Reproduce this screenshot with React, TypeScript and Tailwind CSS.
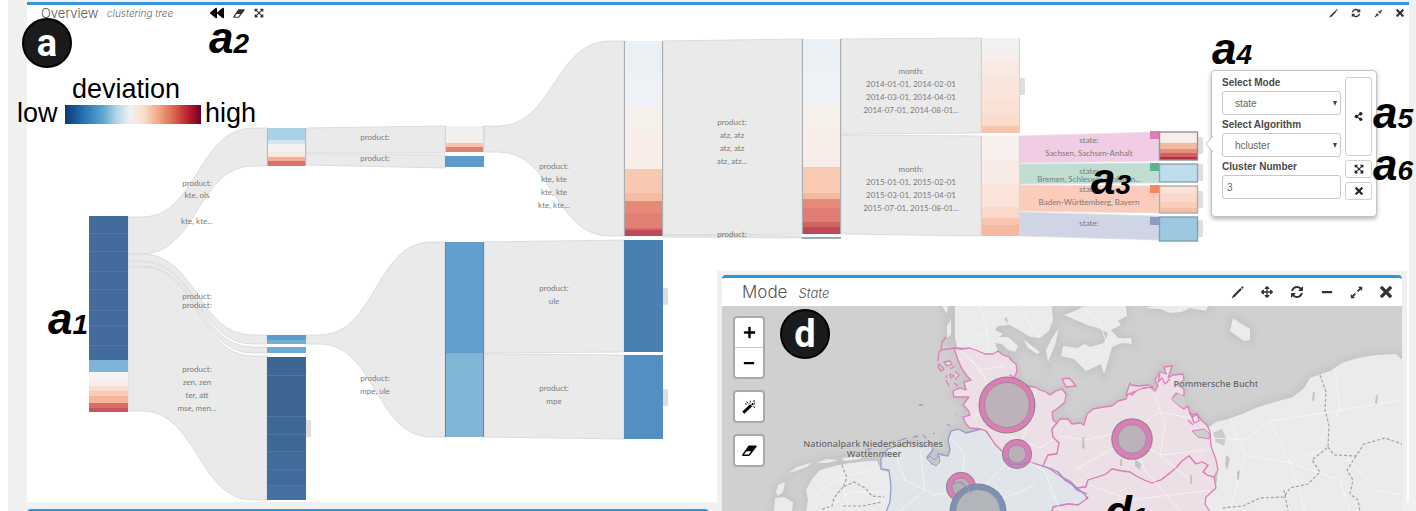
import React from "react";
import {
  FaArrowsAlt,
  FaBackward,
  FaExpandArrowsAlt,
  FaMinus,
  FaPlus,
  FaShareAlt,
} from "react-icons/fa";

type Band = [from: number, to: number, color: string];

interface Bar {
  x: number;
  bands: Band[];
  lines?: number[];
  edge?: string;
}

const BAR_WIDTH = 39;

const bars: Bar[] = [
  {
    x: 89,
    bands: [
      [216, 360, "#436c9c"],
      [360, 372, "#7db3d6"],
      [372, 381, "#f5f3f3"],
      [381, 386, "#f8eee9"],
      [386, 391, "#f9ddcf"],
      [391, 396, "#f8ccb7"],
      [396, 403, "#f4b59b"],
      [403, 408, "#d76d6c"],
      [408, 412, "#c9535c"],
    ],
    lines: [233, 251, 271, 289, 310, 325, 345],
  },
  {
    x: 267,
    bands: [
      [128, 140, "#abd1e5"],
      [140, 144, "#d3e5ef"],
      [144, 152, "#f3f1f1"],
      [152, 157, "#f8e9e1"],
      [157, 161, "#f3b096"],
      [161, 166, "#d9706e"],
    ],
    edge: "#b9bcbf",
  },
  { x: 267, bands: [[335, 340, "#5d9bcb"], [340, 344, "#74b1d6"]] },
  { x: 267, bands: [[347, 353, "#6fabd3"]] },
  {
    x: 267,
    bands: [
      [357, 416, "#3d6692"],
      [416, 451, "#3e6997"],
      [451, 485, "#406c9c"],
      [485, 500, "#4470a3"],
    ],
    lines: [375, 416, 434, 451, 469, 485],
  },
  {
    x: 445,
    bands: [
      [126, 134, "#edf1f5"],
      [134, 143, "#f7eeea"],
      [143, 147, "#f7c5af"],
      [147, 152, "#e08072"],
    ],
    edge: "#d4d6d8",
  },
  { x: 445, bands: [[156, 167, "#5d99ca"]] },
  { x: 445, bands: [[242, 353, "#639fce"], [353, 437, "#80b5d6"]], edge: "#5d87ac" },
  {
    x: 624,
    bands: [
      [41, 74, "#ebf0f5"],
      [74, 108, "#eef1f6"],
      [108, 134, "#f6f0eb"],
      [134, 169, "#f8ede8"],
      [169, 193, "#f9c8b2"],
      [193, 201, "#f6bda4"],
      [201, 213, "#e58a79"],
      [213, 228, "#e07f73"],
      [228, 230, "#d4686a"],
      [230, 236, "#be4858"],
    ],
    edge: "#a9adb1",
  },
  { x: 624, bands: [[240, 352, "#4a7fb2"]] },
  { x: 624, bands: [[355, 439, "#548ec2"]] },
  {
    x: 802,
    bands: [
      [39, 72, "#ebf0f5"],
      [72, 105, "#eef1f6"],
      [105, 131, "#f6f0eb"],
      [131, 167, "#f8ede8"],
      [167, 193, "#f8c9b3"],
      [193, 199, "#f4b9a0"],
      [199, 208, "#e58a79"],
      [208, 222, "#df7d72"],
      [222, 227, "#cf6463"],
      [227, 234, "#be4858"],
    ],
    edge: "#a9adb1",
  },
  { x: 802, bands: [[237, 239, "#a0a8ae"]] },
  {
    x: 981,
    bands: [
      [38, 51, "#f2f1f1"],
      [51, 62, "#f5eeeb"],
      [62, 78, "#f8eae3"],
      [78, 98, "#f9e5dc"],
      [98, 115, "#fae1d5"],
      [115, 126, "#fadbcc"],
      [126, 133, "#f8c6af"],
    ],
    edge: "#d8d2d0",
  },
  {
    x: 981,
    bands: [
      [136, 160, "#f7f0ec"],
      [160, 184, "#f8ebe5"],
      [184, 207, "#fae4da"],
      [207, 218, "#fad9ca"],
      [218, 225, "#f7c5af"],
      [225, 236, "#f4b9a2"],
    ],
    edge: "#d8d2d0",
  },
];

const leafBars: { y: number; height: number; bands: Band[]; edge: string }[] = [
  {
    y: 132,
    height: 28,
    edge: "#9b8f93",
    bands: [
      [132, 143, "#f8ede8"],
      [143, 149, "#f3b9a1"],
      [149, 153, "#e58f7c"],
      [153, 157, "#d0605f"],
      [157, 160, "#b32d45"],
    ],
  },
  { y: 164, height: 18, edge: "#86a7b9", bands: [[164, 182, "#bfdcea"]] },
  {
    y: 186,
    height: 27,
    edge: "#b8a9a4",
    bands: [
      [186, 193, "#fae3d8"],
      [193, 202, "#f9d9cb"],
      [202, 208, "#f8ceba"],
      [208, 213, "#f5bda6"],
    ],
  },
  { y: 217, height: 24, edge: "#7ba0b8", bands: [[217, 241, "#9dc8e0"]] },
];

/** Ribbon between two columns: [x0, top0, bottom0, x1, top1, bottom1]. */
type Ribbon = [number, number, number, number, number, number];

const curvedRibbons: Ribbon[] = [
  [128, 217, 254, 267, 128, 166],
  [128, 254, 261, 267, 335, 344],
  [128, 262, 266, 267, 347, 353],
  [128, 267, 411, 267, 356, 500],
  [484, 126, 152, 624, 41, 236],
  [306, 335, 344, 445, 242, 437],
];

const straightRibbons: Ribbon[] = [
  [306, 128, 153, 445, 126, 153],
  [306, 154, 165, 445, 155, 168],
  [484, 242, 353, 624, 240, 352],
  [484, 354, 437, 624, 355, 439],
  [663, 41, 235, 802, 39, 234],
  [663, 235, 237, 802, 236, 238],
  [841, 39, 134, 981, 38, 133],
  [841, 135, 234, 981, 136, 236],
];

const stateRibbons: { shape: Ribbon; fill: string; tag: string; tagY: number }[] = [
  { shape: [1020, 136, 163, 1159, 132, 161], fill: "#f0cde4", tag: "#da7dbb", tagY: 131 },
  { shape: [1020, 164, 184, 1159, 163, 183], fill: "#c0ddd2", tag: "#60b096", tagY: 163 },
  { shape: [1020, 185, 211, 1159, 186, 213], fill: "#fbccbb", tag: "#f48660", tagY: 185 },
  { shape: [1020, 212, 236, 1159, 216, 240], fill: "#d0d5e5", tag: "#8d9bc5", tagY: 217 },
];

const handles: [number, number][] = [
  [306, 420],
  [663, 288],
  [663, 389],
  [1020, 78],
  [1198, 137],
  [1198, 164],
  [1198, 191],
  [1198, 220],
];

const chartTexts: [number, number, string][] = [
  [197, 186, "product:"],
  [197, 198, "kte, ols"],
  [197, 224, "kte, kte..."],
  [197, 299, "product:"],
  [197, 308, "product:"],
  [197, 372, "product:"],
  [197, 385, "zen, zen"],
  [197, 398, "ter, att"],
  [197, 411, "mse, men..."],
  [375, 140, "product:"],
  [375, 161, "product:"],
  [375, 381, "product:"],
  [375, 394, "mpe, ule"],
  [554, 169, "product:"],
  [554, 182, "kte, kte"],
  [554, 195, "kte, kte"],
  [554, 208, "kte, kte..."],
  [554, 291, "product:"],
  [554, 304, "ule"],
  [554, 391, "product:"],
  [554, 404, "mpe"],
  [732, 125, "product:"],
  [732, 138, "atz, atz"],
  [732, 151, "atz, atz"],
  [732, 164, "atz, atz..."],
  [732, 237, "product:"],
  [911, 74, "month:"],
  [911, 87, "2014-01-01, 2014-02-01"],
  [911, 100, "2014-03-01, 2014-04-01"],
  [911, 113, "2014-07-01, 2014-08-01..."],
  [911, 172, "month:"],
  [911, 185, "2015-01-01, 2015-02-01"],
  [911, 198, "2015-03-01, 2015-04-01"],
  [911, 211, "2015-07-01, 2015-08-01..."],
  [1089, 143, "state:"],
  [1089, 156, "Sachsen, Sachsen-Anhalt"],
  [1089, 174, "state:"],
  [1089, 182, "Bremen, Schleswig-Holstein..."],
  [1089, 192, "state:"],
  [1089, 205, "Baden-Württemberg, Bayern"],
  [1089, 226, "state:"],
];

interface IconProps {
  size: number;
}

function PencilIcon({ size }: IconProps) {
  return (
    <svg width={size} height={size} viewBox="0 0 16 16" fill="currentColor" aria-hidden="true">
      <path d="M12.2,1.8L13.6,0.6Q14.3,0 15,0.8Q15.8,1.6 15.2,2.3L14.1,3.7ZM11.5,2.5L13.4,4.4L4.4,13.6L0.8,15.3L2.4,11.6Z" />
    </svg>
  );
}

function RefreshIcon({ size }: IconProps) {
  return (
    <svg width={size} height={size} viewBox="0 0 1792 1792" fill="currentColor" aria-hidden="true">
      <path d="M1639 1056q0 5-1 7-64 268-268 434.500t-478 166.500q-146 0-282.500-55t-243.500-157l-129 129q-19 19-45 19t-45-19-19-45v-448q0-26 19-45t45-19h448q26 0 45 19t19 45-19 45l-137 137q71 66 161 102t187 36q134 0 250-65t186-179q11-17 53-117 8-23 30-23h192q13 0 22.500 9.500t9.500 22.500zm25-800v448q0 26-19 45t-45 19h-448q-26 0-45-19t-19-45 19-45l138-138q-148-137-349-137-134 0-250 65t-186 179q-11 17-53 117-8 23-30 23h-199q-13 0-22.500-9.500t-9.500-22.500v-7q65-268 270-434.500t480-166.500q146 0 284 55.500t245 156.500l130-129q19-19 45-19t45 19 19 45z" />
    </svg>
  );
}

function EraserIcon({ size }: IconProps) {
  return (
    <svg width={size} height={(size * 3) / 4} viewBox="0 0 16 12" fill="currentColor" aria-hidden="true">
      <path
        fillRule="evenodd"
        d="M6.8,0.8Q7.2,0.4 7.8,0.4H14.8Q16.2,0.6 15.4,2L8.3,11.1Q7.9,11.6 7.2,11.6H0.9Q-0.3,11.3 0.5,9.9ZM2.1,10.2H7L9.8,6.7H4.9Z"
      />
    </svg>
  );
}

function WandIcon({ size }: IconProps) {
  return (
    <svg width={size} height={size} viewBox="0 0 16 16" fill="none" stroke="currentColor" aria-hidden="true">
      <path d="M1.5,14.5L10.5,6" strokeWidth="3.4" />
      <path d="M11,5.6L13,3.8" strokeWidth="2" />
      <path d="M5,2L7,3.6M9.5,0.8V3M12.5,1.2H15M14.5,3V5M12.8,7L15,9M3.6,4.6H5.6M7.5,4.8L8.5,4" strokeWidth="1" />
    </svg>
  );
}

function CloseIcon({ size }: IconProps) {
  return (
    <svg width={size} height={size} viewBox="0 0 12 12" aria-hidden="true">
      <path d="M2,2L10,10M10,2L2,10" stroke="currentColor" strokeWidth="3.2" strokeLinecap="square" />
    </svg>
  );
}

function DiagonalIcon({ size, inward }: IconProps & { inward?: boolean }) {
  return (
    <svg width={size} height={size} viewBox="0 0 16 16" aria-hidden="true">
      <g stroke="currentColor" strokeWidth="2.2" fill="none">
        <path d="M2,14L6.6,9.400M9.400,6.600L14,2" />
      </g>
      {inward ? (
        <path d="M2.8,8.300H7.700V13.200ZM8.300,2.800V7.700H13.200Z" fill="currentColor" />
      ) : (
        <path d="M9.800,1H15V6.200ZM1,9.800V15H6.200Z" fill="currentColor" />
      )}
    </svg>
  );
}

function curvedPath([x0, t0, b0, x1, t1, b1]: Ribbon) {
  const s = x0 + 14;
  const e = x1 - 14;
  const m = (s + e) / 2;
  return `M${x0},${t0}H${s}C${m},${t0} ${m},${t1} ${e},${t1}H${x1}V${b1}H${e}C${m},${b1} ${m},${b0} ${s},${b0}H${x0}Z`;
}

function straightPath([x0, t0, b0, x1, t1, b1]: Ribbon) {
  return `M${x0},${t0}L${x1},${t1}V${b1}L${x0},${b0}Z`;
}

function ClusterTree() {
  return (
    <svg
      className="block h-[478px] w-[1382px] shrink-0"
      viewBox="27 24 1382 478"
      role="img"
      aria-label="Clustering tree"
    >
      <path d="M860,23.500H1072" stroke="#ececec" />
      <g fill="#eaeaea" stroke="#d6d6d6" strokeWidth="0.8">
        {curvedRibbons.map((r, i) => (
          <path key={i} d={curvedPath(r)} />
        ))}
        {straightRibbons.map((r, i) => (
          <path key={i} d={straightPath(r)} />
        ))}
      </g>
      {stateRibbons.map(({ shape, fill }, i) => (
        <path key={i} d={straightPath(shape)} fill={fill} stroke="#dfdfe3" strokeWidth="0.8" />
      ))}
      {handles.map(([x, y], i) => (
        <rect key={i} x={x - 3} y={y} width="8" height="17" rx="1.5" fill="#dedede" />
      ))}
      {bars.map((bar, i) => {
        const top = bar.bands[0][0];
        const bottom = bar.bands[bar.bands.length - 1][1];
        return (
          <g key={i}>
            {bar.bands.map(([from, to, color]) => (
              <rect key={from} x={bar.x} y={from} width={BAR_WIDTH} height={to - from} fill={color} />
            ))}
            {bar.lines?.map((y) => (
              <rect key={y} x={bar.x} y={y} width={BAR_WIDTH} height="1" fill="#4f77a6" />
            ))}
            {bar.edge && (
              <path
                d={`M${bar.x + 0.5},${top}V${bottom}M${bar.x + BAR_WIDTH - 0.5},${top}V${bottom}`}
                stroke={bar.edge}
                strokeWidth="1"
              />
            )}
          </g>
        );
      })}
      {leafBars.map((leaf) => (
        <g key={leaf.y}>
          {leaf.bands.map(([from, to, color]) => (
            <rect key={from} x="1159" y={from} width="39" height={to - from} fill={color} />
          ))}
          <rect
            x="1159.5"
            y={leaf.y}
            width="38"
            height={leaf.height}
            fill="none"
            stroke={leaf.edge}
            strokeWidth="1.4"
          />
        </g>
      ))}
      {stateRibbons.map(({ tag, tagY }) => (
        <rect key={tagY} x="1150" y={tagY} width="9" height="8" fill={tag} />
      ))}
      <g className="font-['Lato',sans-serif] text-[8px]" fill="#7a7a7a" textAnchor="middle">
        {chartTexts.map(([x, y, text], i) => (
          <text key={i} x={x} y={y}>
            {text}
          </text>
        ))}
      </g>
    </svg>
  );
}

function IconButton({ label, children }: { label: string; children: React.ReactNode }) {
  return (
    <button type="button" aria-label={label} className="flex items-center justify-center text-[#333]">
      {children}
    </button>
  );
}

function PickList({ id, label, value }: { id: string; label: string; value: string }) {
  return (
    <div>
      <label htmlFor={id} className="block h-4 text-[10px] leading-4 font-bold text-[#4a4a4a]">
        {label}
      </label>
      <div className="relative">
        <select
          id={id}
          defaultValue={value}
          className="block h-6 w-full appearance-none rounded-[3px] border border-[#c8c8c8] bg-white pl-3 text-[10px] text-[#666]"
        >
          <option>{value}</option>
        </select>
        <span className="pointer-events-none absolute top-[10px] right-1 border-x-[2px] border-t-[5px] border-x-transparent border-t-[#444]" />
      </div>
    </div>
  );
}

function ClusterPopover() {
  const action =
    "flex items-center justify-center rounded-[3px] border border-[#d0d0d0] bg-white text-[#222]";
  return (
    <form className="absolute top-[65px] left-[1184px] flex h-[147px] w-[166px] gap-1 rounded-[4px] border border-[#c4c4c4] bg-white pt-1 pr-1 pl-[10px] font-['Liberation_Sans',sans-serif] shadow-[0_2px_4px_rgba(0,0,0,0.3)]">
      <svg className="absolute top-[65px] -left-[7px] h-4 w-2" viewBox="0 0 8 16">
        <path d="M8,0L1,8L8,16" fill="#fff" stroke="#c4c4c4" />
      </svg>
      <div className="flex flex-1 flex-col gap-[2px]">
        <PickList id="mode" label="Select Mode" value="state" />
        <PickList id="algorithm" label="Select Algorithm" value="hcluster" />
        <div>
          <label htmlFor="count" className="block h-4 text-[10px] leading-4 font-bold text-[#4a4a4a]">
            Cluster Number
          </label>
          <input
            id="count"
            defaultValue="3"
            className="block h-6 w-full rounded-[3px] border border-[#c8c8c8] bg-white px-1 text-[10px] text-[#666]"
          />
        </div>
      </div>
      <div className="flex w-[27px] flex-col gap-1 pt-[2px]">
        <button type="button" aria-label="Split cluster" className={`${action} h-[79px]`}>
          <FaShareAlt size={9} />
        </button>
        <button type="button" aria-label="Expand cluster" className={`${action} h-[18px]`}>
          <FaExpandArrowsAlt size={10} />
        </button>
        <button type="button" aria-label="Remove cluster" className={`${action} h-[18px]`}>
          <CloseIcon size={8} />
        </button>
      </div>
    </form>
  );
}

function Legend() {
  return (
    <div className="absolute top-[77px] -left-[10px] flex flex-col font-['Liberation_Sans',sans-serif] text-[27px] leading-6 text-black">
      <span className="pl-[55px]">deviation</span>
      <div className="flex items-center gap-1">
        <span className="w-11">low</span>
        <span className="mt-[2px] h-[19px] w-[136px] bg-[linear-gradient(90deg,#0a3a76,#2a76b6_15%,#5ea6cf_28%,#b3d7e8_38%,#f1f1f1_48%,#fbdcc9_58%,#f2a583_69%,#d75f4c_81%,#b3172d_92%,#6b0220)]" />
        <span>high</span>
      </div>
    </div>
  );
}

function OverviewPanel() {
  return (
    <section className="relative col-span-full row-span-2 row-start-1 overflow-hidden border-t-[3px] border-[#3a95d8] bg-white">
      <header className="mb-[3px] flex h-4 items-center justify-between pr-[5px] pl-[14px]">
        <div className="flex items-center">
          <h1 className="w-[66px] font-['Inter',sans-serif] text-[13px] leading-4 font-light text-[#555]">
            Overview
          </h1>
          <em className="w-[103px] font-['Inter',sans-serif] text-[10px] leading-4 font-light text-[#666]">
            clustering tree
          </em>
          <div className="flex items-center gap-[9px]">
            <IconButton label="Back">
              <FaBackward size={14} color="#000" />
            </IconButton>
            <IconButton label="Erase">
              <EraserIcon size={12} />
            </IconButton>
            <IconButton label="Expand all">
              <FaExpandArrowsAlt size={10} />
            </IconButton>
          </div>
        </div>
        <div className="flex items-center gap-[13px]">
          <IconButton label="Edit">
            <PencilIcon size={9} />
          </IconButton>
          <IconButton label="Refresh">
            <RefreshIcon size={10} />
          </IconButton>
          <IconButton label="Compress">
            <DiagonalIcon size={9} inward />
          </IconButton>
          <IconButton label="Close">
            <CloseIcon size={8} />
          </IconButton>
        </div>
      </header>
      <ClusterTree />
      <ClusterPopover />
    </section>
  );
}

const SCHLESWIG =
  "M954,348L962,349L970,348L978,351L985,354L993,354L998,351L1003,355L1009,357L1012,361L1016,364L1017,371L1014,378L1010,375L1018,380L1027,386L1035,387L1040,390L1046,392L1050,395L1056,391L1062,389L1066,394L1065,402L1058,408L1052,412L1053,420L1057,423L1052,429L1053,437L1059,443L1057,454L1048,455L1043,466L1030,462L1012,458L1002,451L995,444L991,438L986,431L981,429L970,428L966,424L963,417L970,415L968,410L963,405L966,401L969,397L960,397L954,397L953,391L960,388L966,390L964,382L971,380L967,376L962,369L958,360Z";
const MECKLENBURG =
  "M1057,423L1060,419L1068,419L1072,424L1080,423L1084,425L1087,414L1093,409L1103,407L1112,406L1118,401L1126,399L1128,393L1132,395L1138,389L1150,387L1155,391L1158,386L1155,380L1160,372L1166,374L1164,367L1172,366L1170,372L1168,378L1173,375L1183,374L1184,380L1177,385L1184,389L1184,396L1176,393L1172,399L1178,405L1184,409L1188,406L1190,414L1198,415L1201,420L1207,425L1210,432L1211,446L1216,460L1218,470L1214,477L1207,475L1203,472L1208,465L1202,462L1196,464L1189,456L1182,461L1176,468L1170,473L1161,480L1152,483L1144,480L1136,476L1130,472L1122,471L1112,469L1106,474L1098,477L1088,480L1086,487L1077,488L1070,481L1060,476L1050,469L1043,466L1048,455L1057,454L1059,443L1053,437L1052,429Z";
const BRANDENBURG =
  "M1077,488L1086,487L1088,480L1098,477L1106,474L1112,469L1122,471L1130,472L1136,476L1144,480L1152,483L1161,480L1170,473L1176,468L1182,461L1189,456L1196,464L1202,462L1208,465L1203,472L1207,475L1214,477L1216,488L1206,497L1205,504L1210,512H1052L1053,507L1068,504L1078,505L1088,498L1082,492Z";
const LOWER_SAXONY =
  "M951,431L958,429L966,433L981,429L986,431L991,438L995,444L1002,451L1012,458L1030,462L1043,466L1052,469L1058,472L1065,480L1073,485L1077,490L1087,494L1086,500L1078,505L1068,504L1053,507L1052,512H886L890,502L891,486L889,470L881,469L881,458L888,449L897,446L912,442L922,447L930,444L933,450L927,457L932,464L938,461L938,454L948,456L950,450L948,440Z";
const NETHERLANDS =
  "M806,512L808,500L806,490L812,479L820,470L834,466L850,463L868,461L877,461L881,470L889,472L891,486L890,502L886,512Z";
const POLAND =
  "M1209,427L1216,422L1228,419L1242,414L1258,407L1275,402L1293,397L1304,388L1310,378L1318,375L1330,371L1342,363L1358,358L1376,355L1396,354L1402,360V512H1205L1206,497L1216,488L1218,470L1211,446Z";

const DENMARK = [
  "M955,306H1009L1011,314L1004,319L1009,325L998,326L995,330L1003,334L999,337L1008,337L1018,346L1015,352L1007,349L1002,344L995,343L998,351L993,354L985,354L978,351L970,348L957,347L955,337Z",
  "M1002,306H1052L1053,320L1049,331L1040,338L1030,337L1019,330L1008,324L1006,312Z",
  "M947,326L951,320L951,334L947,338Z",
  "M942,306L948,306L947,314Z",
  "M1023,339L1040,352L1037,354L1028,348Z",
  "M1059,328L1055,345L1048,362L1046,350L1051,340Z",
  "M1064,315L1075,311L1085,306H1126L1127,316L1118,321L1121,325L1111,330L1118,338L1131,338L1132,344L1122,343L1112,347L1107,365L1104,374L1101,364L1086,371L1074,359L1061,356L1063,346L1077,348L1085,344L1090,347L1104,343L1108,333L1098,328L1090,326L1078,321Z",
  "M1145,308L1152,306H1208L1206,311L1190,308L1182,312L1170,313L1160,309Z",
  "M1230,331L1233,318L1240,323L1250,329L1250,340L1244,341Z",
];

const FRISIAN_ISLANDS = [
  "M774,512L775,498L784,497L793,502L792,512Z",
  "M776,492L778,485L785,482L783,492L778,496Z",
  "M788,473L797,467L813,462L807,467L796,471Z",
  "M817,463L826,459L838,460L828,463Z",
  "M842,458L862,456L860,459L844,461Z",
];

const ROADS = [
  "M980,306L986,325L989,353M1020,306L1030,325L1040,338M990,330L970,340M1080,306L1100,322L1107,345",
  "M970,358L985,378L990,400L1008,436L1040,448L1052,440M960,350L980,370L1005,366M990,400L975,418M1035,392L1030,420L1017,454L1008,470M1017,454L990,480L960,511M1017,454L1045,472L1060,511",
  "M895,452L905,480L935,495L965,489L1000,500L1035,485M900,511L925,490L920,450M950,436L965,455L961,487",
  "M1060,436L1085,440L1132,430L1160,412L1200,420M1075,470L1110,450L1132,439L1160,455L1205,450M1132,439L1145,470L1180,511M1090,485L1130,500L1210,490M1155,395L1165,425L1160,455L1190,480",
  "M1215,438L1245,440L1270,421L1310,415L1402,400M1230,420L1245,455L1230,511M1245,455L1290,463L1330,447M1270,421L1290,463L1305,511M1335,370L1340,410L1320,440M1345,455L1375,490L1402,495M1290,463L1340,480L1350,511",
  "M815,495L840,478L870,470M825,511L850,492L885,492M840,478L850,511",
];

const BORDERS = [
  "M1320,375L1326,392L1325,410L1329,425L1328,447L1312,460L1320,472L1308,484L1290,488L1284,497L1260,498L1243,506L1222,508",
  "M1328,447L1334,455L1356,456L1364,444L1385,438L1402,444M1356,456L1347,470L1353,480L1350,494L1358,500L1360,511M1284,490L1288,511",
  "M842,465L847,478L843,487L854,482L865,488L872,496L884,497M843,487L834,498L832,506L820,510M843,506L862,506L882,502",
];

const rings = [
  { cx: 1007, cy: 405, r: 25.5, w: 6, color: "#dd7db8", fill: "#bdb2b9" },
  { cx: 1017, cy: 454, r: 12, w: 6, color: "#dd7db8", fill: "#bbb0b8" },
  { cx: 961, cy: 487, r: 12, w: 6, color: "#dd7db8", fill: "#b4b1b8" },
  { cx: 978, cy: 512, r: 25.5, w: 6, color: "#7c90bb", fill: "#b2b5ba" },
  { cx: 1132, cy: 439, r: 17.5, w: 6.5, color: "#dd7db8", fill: "#bdb2b9" },
];

function StateMap() {
  return (
    <svg
      className="block h-full min-h-[205px] w-full"
      viewBox="722 306 680 205"
      preserveAspectRatio="xMidYMin slice"
      role="img"
      aria-label="Map of states"
    >
      <defs>
        <filter id="shore" x="-5%" y="-5%" width="110%" height="110%">
          <feGaussianBlur stdDeviation="3" />
        </filter>
      </defs>
      <rect x="722" y="306" width="680" height="300" fill="#d0d0d0" />
      <g fill="#c2c2c2" stroke="#c2c2c2" strokeWidth="7" opacity="0.8" filter="url(#shore)">
        {[...DENMARK, ...FRISIAN_ISLANDS, SCHLESWIG, MECKLENBURG, POLAND, LOWER_SAXONY, NETHERLANDS].map((d) => (
          <path key={d} d={d} />
        ))}
      </g>
      <g fill="#ebebeb">
        {[...DENMARK, ...FRISIAN_ISLANDS, NETHERLANDS, POLAND].map((d) => (
          <path key={d} d={d} />
        ))}
      </g>
      <g strokeWidth="1.3" strokeLinejoin="round">
        <path d={LOWER_SAXONY} fill="#e1e4e8" stroke="#93a0c8" />
        <path d={SCHLESWIG} fill="#ecdfe6" stroke="#dd7fb9" />
        <path d={MECKLENBURG} fill="#ecdfe6" stroke="#dd7fb9" />
        <path d={BRANDENBURG} fill="#ecdfe6" stroke="#dd7fb9" />
        <path d="M1043,466L1052,469L1058,472L1065,480L1073,485L1077,490L1087,494" fill="none" stroke="#9391c2" />
      </g>
      <g fill="#cfcfcf" stroke="#dd7fb9">
        <path d="M1192,431L1204,429L1210,434L1209,439L1198,437Z" />
        <path d="M1172,399L1180,394L1186,398L1184,408L1178,405Z" stroke="none" />
      </g>
      <path d="M1213,433L1222,429L1226,438L1224,446L1216,442Z" fill="#cbcbcb" />
      <g fill="none" stroke="#f8f8f8" strokeWidth="1" opacity="0.75">
        {ROADS.map((d) => (
          <path key={d} d={d} />
        ))}
      </g>
      <g fill="none" stroke="#a2a2a2" strokeWidth="1.2" strokeDasharray="3 2">
        {BORDERS.map((d) => (
          <path key={d} d={d} />
        ))}
      </g>
      <g fill="#c4c4c4">
        <path d="M1082,438L1084,437L1085,448L1082,449ZM1135,459L1141,464L1140,470L1135,466ZM1120,460L1122,458L1122,466L1120,466ZM1226,455L1230,458L1227,470L1225,464ZM1237,472L1240,470L1239,480L1237,479ZM1190,476L1192,474L1192,484L1190,483ZM1376,396L1378,394L1377,404L1375,403ZM1313,392L1315,392L1314,402L1312,400Z" />
      </g>
      <g fill="#e9dde4" stroke="#dd7fb9" strokeWidth="1.3" strokeLinejoin="round">
        <path
          d="M946,337L942,342L941,350L939,352L938,361M941,350L948,349L954,348L962,349M939,364L944,369L941,371L938,367Z"
          fill="none"
        />
        <path d="M944,362L950,361L952,364L947,366ZM950,374L954,376L951,378ZM946,380L949,386M955,371L959,375L957,378M950,369L955,366M947,375L946,378M954,383L958,386M955,378L957,380M919,405L923,405M956,414L957,415" />
        <path d="M1062,379L1069,378L1072,381L1076,386L1066,387Z" />
        <path d="M1130,383L1131,385L1138,386L1148,385L1153,387L1143,388L1126,395Z" />
        <path d="M1190,412L1193,417L1197,413L1199,421L1194,423ZM1188,420L1193,425" fill="none" />
        <path d="M1160,374L1158,382L1162,378L1165,384L1170,379" fill="none" />
      </g>
      <g fill="none" stroke="#94a2c9" strokeWidth="1.3">
        <path d="M865,450L872,448M878,446L884,444M888,443L894,441M900,440L907,438M913,437L918,436M923,435L926,438M864,452L870,453L868,449M947,424L950,426M933,433L935,434" />
      </g>
      <path
        d="M930,456L934,460L939,456L940,462L936,466L931,463L927,459Z"
        fill="#c5c7ca"
        stroke="#93a0c8"
        strokeWidth="1"
      />
      {rings.map((ring) => (
        <g key={ring.cx}>
          <circle cx={ring.cx} cy={ring.cy} r={ring.r + ring.w / 2} fill="#858585" />
          <circle
            cx={ring.cx}
            cy={ring.cy}
            r={ring.r - 0.5}
            fill={ring.fill}
            stroke={ring.color}
            strokeWidth={ring.w - 1}
          />
          <circle cx={ring.cx} cy={ring.cy} r={ring.r - ring.w / 2} fill="none" stroke="#8d8a8d" strokeWidth="0.8" />
        </g>
      ))}
      <path d="M952,484L960,482L968,488L971,493" fill="none" stroke="#a98dc0" strokeWidth="1.4" />
      <path d="M1006,458L1010,464L1020,465L1027,462" fill="none" stroke="#a783c0" strokeWidth="1.4" />
      <g
        className="font-['Open_Sans',sans-serif] text-[9px] font-semibold"
        fill="#6a6a6a"
        stroke="#dcdcdc"
        strokeWidth="1.5"
        strokeOpacity="0.6"
        paintOrder="stroke"
        textAnchor="middle"
      >
        <text x="1216" y="387">Pommersche Bucht</text>
        <text x="873" y="447">Nationalpark Niedersächsisches</text>
        <text x="874" y="457">Wattenmeer</text>
      </g>
    </svg>
  );
}

function MapPanel() {
  const tool = "flex h-[33px] w-8 items-center justify-center rounded-[4px] border-2 border-[#a9a9a9] bg-white text-black";
  return (
    <section className="relative col-start-2 row-span-2 row-start-2 bg-[#f0f0f0] px-[5px] pt-1">
      <div className="flex h-full flex-col overflow-hidden rounded-t-[4px] border-t-[3px] border-[#2a97dc] bg-white">
        <header className="flex h-[28px] shrink-0 items-center justify-between pr-[9px] pl-5">
          <div className="flex items-baseline gap-[11px] font-['Inter',sans-serif] font-light text-[#555]">
            <h2 className="text-[17px] leading-6">Mode</h2>
            <em className="text-[13px] leading-6">State</em>
          </div>
          <div className="flex items-center gap-[17px] pr-px">
            <IconButton label="Edit">
              <PencilIcon size={13} />
            </IconButton>
            <IconButton label="Move">
              <FaArrowsAlt size={12} />
            </IconButton>
            <IconButton label="Refresh">
              <RefreshIcon size={14} />
            </IconButton>
            <IconButton label="Minimise">
              <FaMinus size={12} />
            </IconButton>
            <IconButton label="Expand">
              <DiagonalIcon size={13} />
            </IconButton>
            <IconButton label="Close">
              <CloseIcon size={12} />
            </IconButton>
          </div>
        </header>
        <div className="relative min-h-0 flex-1 overflow-hidden">
          <StateMap />
          <div className="absolute top-[10px] left-[11px] flex flex-col gap-[11px]">
            <div className="flex h-[63px] w-8 flex-col rounded-[4px] border-2 border-[#a9a9a9] bg-white text-black">
              <button
                type="button"
                aria-label="Zoom in"
                className="flex flex-1 items-center justify-center border-b border-[#ccc]"
              >
                <FaPlus size={13} />
              </button>
              <button type="button" aria-label="Zoom out" className="flex flex-1 items-center justify-center">
                <FaMinus size={12} />
              </button>
            </div>
            <button type="button" aria-label="Pick" className={tool}>
              <WandIcon size={14} />
            </button>
            <button type="button" aria-label="Erase" className={tool}>
              <EraserIcon size={15} />
            </button>
          </div>
        </div>
      </div>
    </section>
  );
}

function Callout({ letter, digit, place }: { letter: string; digit: string; place: string }) {
  return (
    <span
      className={`absolute font-['Liberation_Sans',sans-serif] text-[44px] leading-none font-bold text-black italic ${place}`}
    >
      {letter}
      <span className="text-[28px] leading-none">{digit}</span>
    </span>
  );
}

function Badge({ letter, place }: { letter: string; place: string }) {
  return (
    <span
      className={`absolute flex size-[50px] items-center justify-center rounded-full border-2 border-black bg-[#1b1b1b] pb-px font-['Roboto',sans-serif] text-[38px] leading-none font-bold text-white ${place}`}
    >
      {letter}
    </span>
  );
}

export default function App() {
  return (
    <div className="relative flex h-screen min-h-[511px] overflow-hidden bg-[#f0f0f0]">
      <div className="w-[27px] shrink-0 border-l-8 border-white" />
      <main className="relative grid min-w-0 flex-1 grid-cols-[690px_minmax(0,1fr)_2px] grid-rows-[269px_231px_minmax(0,1fr)] pt-[2px]">
        <OverviewPanel />
        <div className="col-start-1 row-start-3 bg-[#f0f0f0] pt-[7px] pr-2">
          <div className="h-full rounded-t-[4px] border-t-4 border-[#2a97dc] bg-white" />
        </div>
        <MapPanel />
        <Legend />
      </main>
      <div className="w-[7px] shrink-0" />
      <Badge letter="a" place="top-[18px] left-[22px]" />
      <Badge letter="d" place="top-[309px] left-[780px]" />
      <Callout letter="a" digit="1" place="top-[297px] left-[48px]" />
      <Callout letter="a" digit="2" place="top-[16px] left-[209px]" />
      <Callout letter="a" digit="3" place="top-[157px] left-[1091px]" />
      <Callout letter="a" digit="4" place="top-[27px] left-[1212px]" />
      <Callout letter="a" digit="5" place="top-[91px] left-[1373px]" />
      <Callout letter="a" digit="6" place="top-[143px] left-[1373px]" />
      <Callout letter="d" digit="1" place="top-[490px] left-[1105px]" />
    </div>
  );
}
